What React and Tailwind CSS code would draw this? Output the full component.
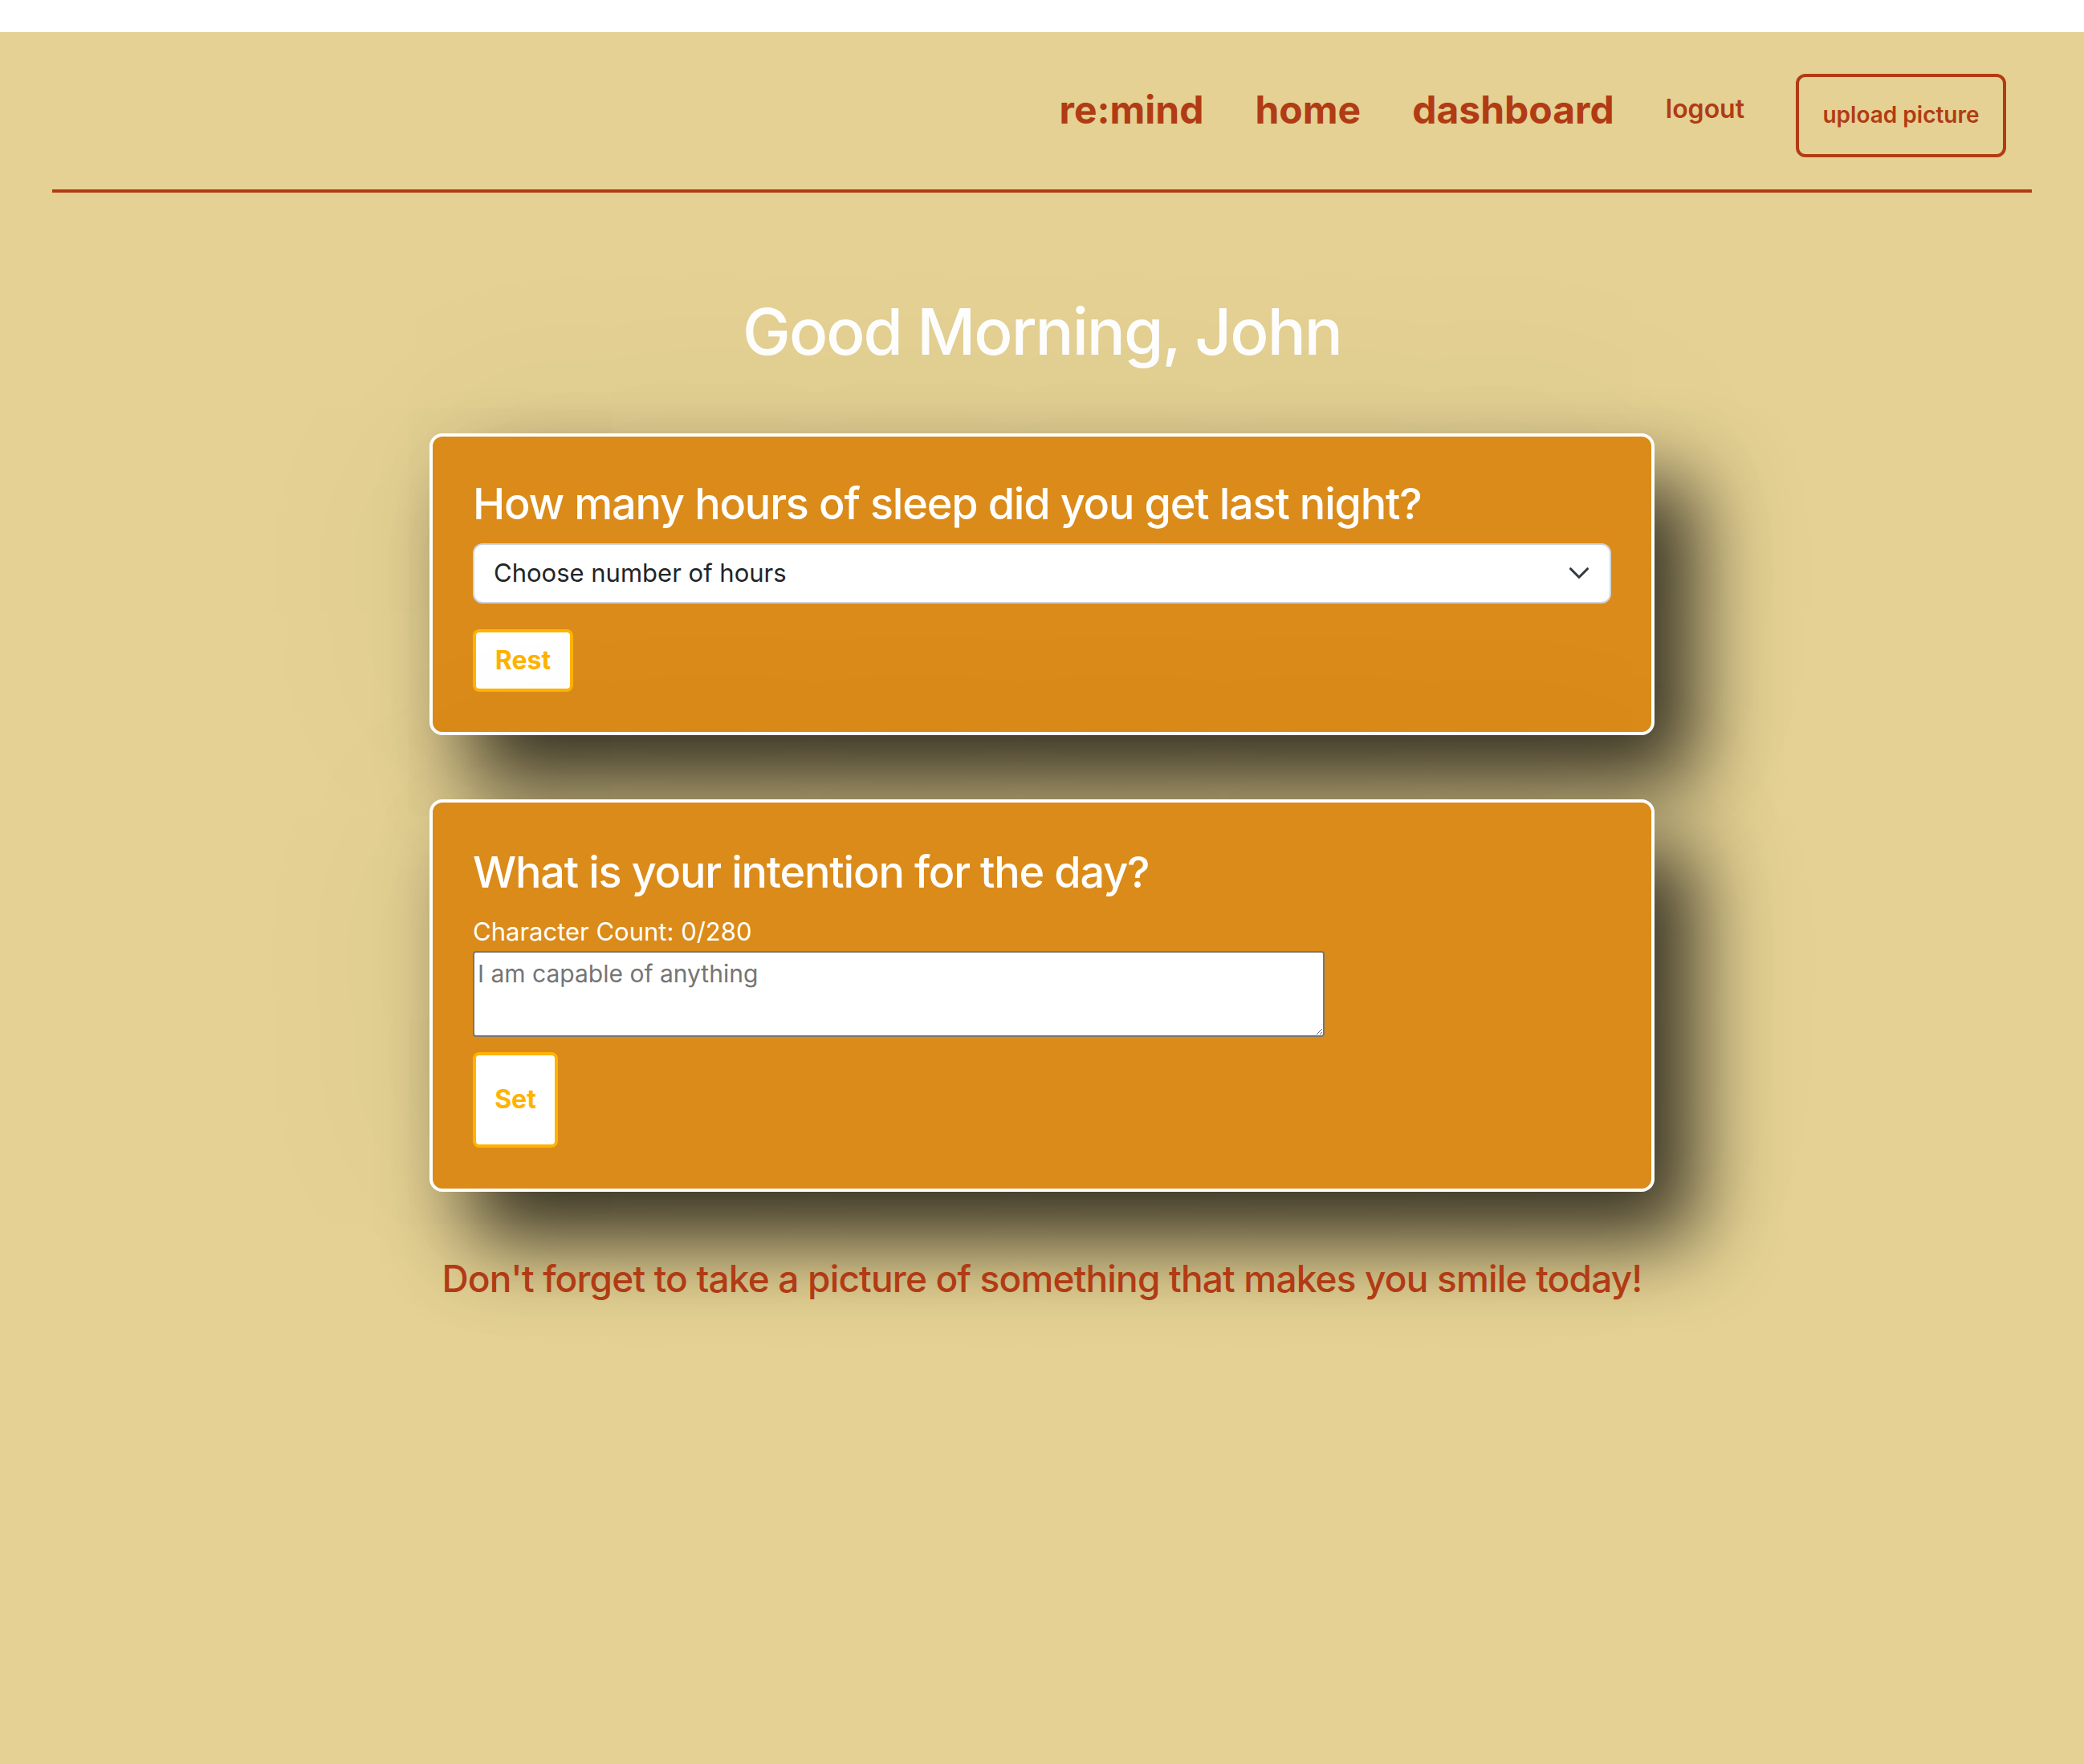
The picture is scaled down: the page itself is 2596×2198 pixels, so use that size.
import React from "react";

function Chevron() {
  return (
    <svg
      width="28"
      height="28"
      viewBox="0 0 16 16"
      fill="none"
      stroke="#343a40"
      strokeWidth="1.8"
      strokeLinecap="round"
      strokeLinejoin="round"
      className="pointer-events-none absolute right-[26px] top-1/2 -translate-y-1/2"
    >
      <path d="m2 5 6 6 6-6" />
    </svg>
  );
}

export default function App() {
  return (
    <div className="min-h-[2198px] bg-white font-[Inter,sans-serif]">
      <div className="mt-[40px] min-h-[2158px] bg-[#e4d193]">
        <header className="mx-[65px] border-b-4 border-[#b13b14]">
          <nav className="flex items-start justify-end gap-[64px] pt-[52px] pr-[32px] pb-[40px]">
            <a className="mt-[16px] text-[48px] leading-[1.2] font-bold text-[#b13b14]">re:mind</a>
            <a className="mt-[16px] text-[48px] leading-[1.2] font-bold text-[#b13b14]">home</a>
            <a className="mt-[16px] text-[48px] leading-[1.2] font-bold text-[#b13b14]">dashboard</a>
            <a className="mt-[20px] text-[32px] leading-[1.5] font-semibold text-[#b13b14]">logout</a>
            <button className="flex h-[104px] w-[262px] items-center justify-center rounded-[12px] border-4 border-[#b13b14] text-[28px] leading-[1.2] font-semibold text-[#b13b14]">
              upload picture
            </button>
          </nav>
        </header>

        <main className="flex flex-col items-center">
          <h1 className="mt-[125px] text-[80px] leading-[1.2] font-medium tracking-[-0.025em] text-white">
            Good Morning, John
          </h1>

          <section className="mt-[79px] w-[1526px] rounded-[16px] border-4 border-white bg-[#db8b19] px-[50px] pt-[51px] pb-[50px] shadow-[50px_60px_100px_rgba(0,0,0,0.75),0_0_300px_rgba(0,0,0,0.08)]">
            <h3 className="mb-[15px] text-[54px] leading-[1.24] font-medium tracking-[-0.022em] text-white">
              How many hours of sleep did you get last night?
            </h3>
            <div className="relative">
              <select className="h-[75px] w-full appearance-none rounded-[12px] border-2 border-[#ced4da] bg-white pl-[24px] pr-[72px] text-[31px] leading-[1.5] text-[#212529] outline-none">
                <option>Choose number of hours</option>
                <option>4</option>
                <option>5</option>
                <option>6</option>
                <option>7</option>
                <option>8</option>
                <option>9</option>
              </select>
              <Chevron />
            </div>
            <button className="mt-[32px] flex h-[78px] w-[125px] items-center justify-center rounded-[8px] border-4 border-[#ffb300] bg-white text-[32px] leading-[1.5] font-bold text-[#ffb300]">
              Rest
            </button>
          </section>

          <section className="mt-[80px] w-[1526px] rounded-[16px] border-4 border-white bg-[#db8b19] px-[50px] pt-[54px] pb-[51px] shadow-[50px_60px_100px_rgba(0,0,0,0.75),0_0_300px_rgba(0,0,0,0.08)]">
            <h3 className="mb-[16px] text-[54px] leading-[1.24] font-medium tracking-[-0.022em] text-white">
              What is your intention for the day?
            </h3>
            <p className="text-[31px] leading-[1.55] text-white">Character Count: 0/280</p>
            <textarea
              placeholder="I am capable of anything"
              className="block h-[107px] w-[1061px] rounded-[4px] border-2 border-[#767676] bg-white px-[4px] py-[4px] text-[30px] leading-[1.5] text-[#212529] placeholder:text-[#757575] outline-none"
            />
            <button className="mt-[19px] flex h-[119px] w-[106px] items-center justify-center rounded-[8px] border-4 border-[#ffb300] bg-white text-[32px] leading-[1.5] font-bold text-[#ffb300]">
              Set
            </button>
          </section>

          <p className="mt-[80px] text-[46px] leading-[1.25] font-medium tracking-[-0.018em] text-[#b13b14]">
            Don't forget to take a picture of something that makes you smile today!
          </p>
        </main>
      </div>
    </div>
  );
}
